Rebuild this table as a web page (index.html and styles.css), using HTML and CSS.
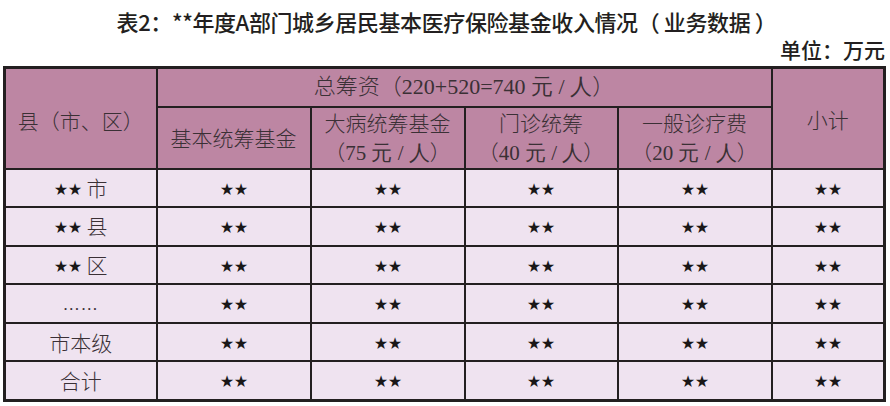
FILE: index.html
```html
<!DOCTYPE html>
<html lang="zh">
<head>
<meta charset="utf-8">
<link rel="stylesheet" href="styles.css">
</head>
<body>
<div class="page">
  <h1 class="title">表2：**年度A部门城乡居民基本医疗保险基金收入情况（ 业务数据 ）</h1>
  <div class="unit">单位：万元</div>
  <table class="tbl">
    <colgroup>
      <col class="c1"><col class="c2"><col class="c3"><col class="c4"><col class="c5"><col class="c6">
    </colgroup>
    <thead>
      <tr class="h1">
        <th rowspan="2" class="county">县（市、区）</th>
        <th colspan="4" class="total">总筹资（<span class="num">220+520=740 元 / 人</span>）</th>
        <th rowspan="2" class="sub">小计</th>
      </tr>
      <tr class="h2">
        <th>基本统筹基金</th>
        <th>大病统筹基金<br>（<span class="num">75 元 / 人</span>）</th>
        <th>门诊统筹<br>（<span class="num">40 元 / 人</span>）</th>
        <th>一般诊疗费<br>（<span class="num">20 元 / 人</span>）</th>
      </tr>
    </thead>
    <tbody>
      <tr><td><span class="star">★★</span> 市</td><td><span class="star">★★</span></td><td><span class="star">★★</span></td><td><span class="star">★★</span></td><td><span class="star">★★</span></td><td><span class="star">★★</span></td></tr>
      <tr><td><span class="star">★★</span> 县</td><td><span class="star">★★</span></td><td><span class="star">★★</span></td><td><span class="star">★★</span></td><td><span class="star">★★</span></td><td><span class="star">★★</span></td></tr>
      <tr><td><span class="star">★★</span> 区</td><td><span class="star">★★</span></td><td><span class="star">★★</span></td><td><span class="star">★★</span></td><td><span class="star">★★</span></td><td><span class="star">★★</span></td></tr>
      <tr><td><span class="dots">……</span></td><td><span class="star">★★</span></td><td><span class="star">★★</span></td><td><span class="star">★★</span></td><td><span class="star">★★</span></td><td><span class="star">★★</span></td></tr>
      <tr><td>市本级</td><td><span class="star">★★</span></td><td><span class="star">★★</span></td><td><span class="star">★★</span></td><td><span class="star">★★</span></td><td><span class="star">★★</span></td></tr>
      <tr><td>合计</td><td><span class="star">★★</span></td><td><span class="star">★★</span></td><td><span class="star">★★</span></td><td><span class="star">★★</span></td><td><span class="star">★★</span></td></tr>
    </tbody>
  </table>
</div>
</body>
</html>
```

FILE: styles.css
```css
html, body {
  margin: 0;
  padding: 0;
  background: #ffffff;
}
.page {
  width: 890px;
  padding: 0 0 0 3px;
  box-sizing: border-box;
}
.title {
  margin: 0;
  padding-top: 8px;
  height: 27px;
  font-family: "Noto Sans CJK SC", "Noto Sans", sans-serif;
  font-size: 22px;
  font-weight: 500;
  line-height: 27px;
  text-align: center;
  color: #231f20;
  letter-spacing: -0.4px;
}
.unit {
  height: 31px;
  padding-right: 5px;
  font-family: "Noto Sans CJK SC", "Noto Sans", sans-serif;
  font-size: 21px;
  font-weight: 500;
  line-height: 28px;
  text-align: right;
  color: #231f20;
}
.tbl {
  width: 880px;
  border-collapse: collapse;
  border: 3px solid #231f20;
  table-layout: fixed;
  font-family: "Noto Sans CJK SC", sans-serif;
  font-weight: 300;
  color: #3a3035;
}
.c1 { width: 152px; }
.c2 { width: 154px; }
.c3 { width: 154px; }
.c4 { width: 153px; }
.c5 { width: 154px; }
.c6 { width: 113px; }
.tbl th, .tbl td {
  border: 2px solid #231f20;
  text-align: center;
  vertical-align: middle;
  padding: 0;
}
.tbl th {
  background: #bd86a3;
  font-weight: 300;
  font-size: 21px;
  line-height: 29px;
}
.tbl .h1 { height: 39px; }
.tbl .h2 { height: 62px; }
.tbl .total { padding-bottom: 3px; font-size: 22px; }
.tbl .county { padding-top: 5px; }
.tbl .sub { padding-top: 2px; }
.num {
  font-family: "Liberation Serif", serif;
  font-size: 21px;
}
.tbl .total .num { font-size: 22px; }
.tbl td {
  background: #efe3f0;
  height: 36px;
  font-size: 21px;
  line-height: 24px;
}
.tbl tbody tr:nth-child(even) td { height: 37px; }
.star {
  font-family: "DejaVu Sans", sans-serif;
  font-size: 13.5px;
  color: #1a1718;
  vertical-align: 2px;
}
.dots {
  font-family: "Liberation Serif", serif;
  font-size: 17px;
  letter-spacing: 1px;
}
```
